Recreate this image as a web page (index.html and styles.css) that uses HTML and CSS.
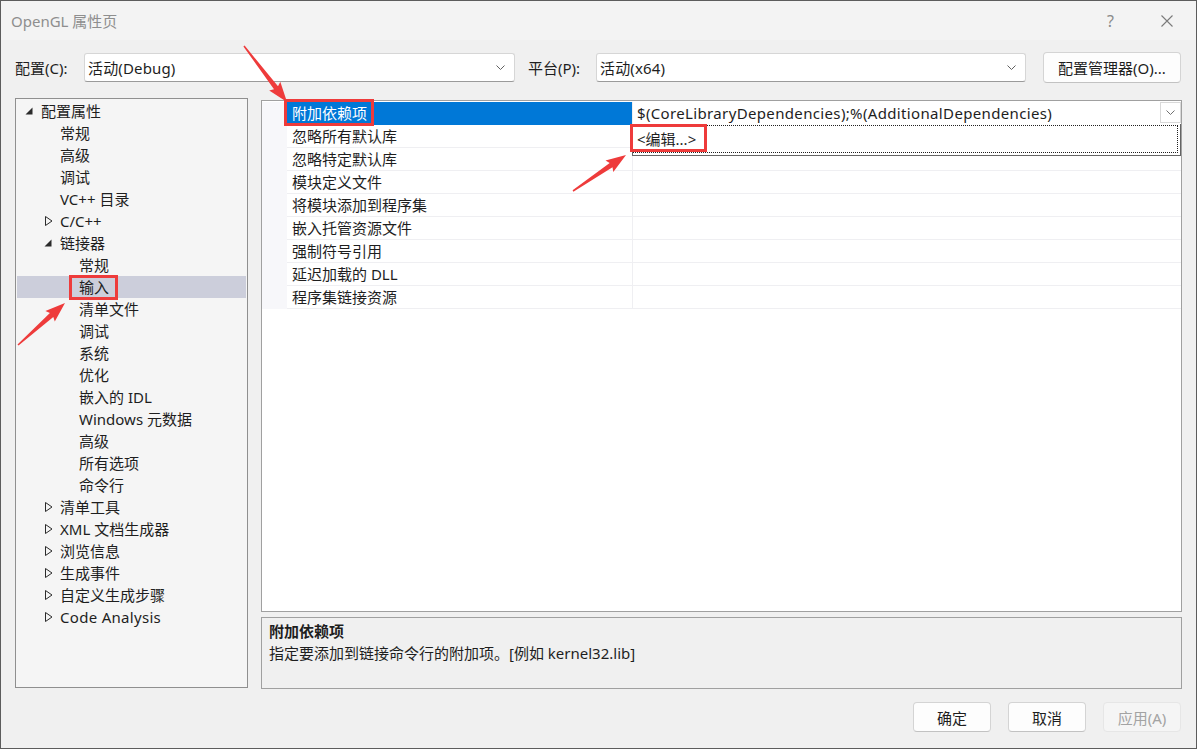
FILE: index.html
```html
<!DOCTYPE html>
<html lang="zh-CN">
<head>
<meta charset="utf-8">
<title>OpenGL 属性页</title>
<link rel="stylesheet" href="styles.css">
</head>
<body>
<div class="window">
  <div class="titlebar">
    <span class="title">OpenGL 属性页</span>
    <div class="title-actions">
      <span class="help">?</span>
      <svg class="close" width="12" height="12" viewBox="0 0 12 12"><path d="M0.5 0.5 L11.5 11.5 M11.5 0.5 L0.5 11.5" stroke="#7a7a7a" stroke-width="1.1" fill="none"/></svg>
    </div>
  </div>

  <div class="config-row">
    <span class="cfg-label">配置(C):</span>
    <div class="combo combo-config">
      <span class="combo-text">活动(Debug)</span>
      <svg class="chev" width="9" height="5" viewBox="0 0 9 5"><polyline points="0.5,0.5 4.5,4.5 8.5,0.5" fill="none" stroke="#606060" stroke-width="1"/></svg>
    </div>
    <span class="cfg-label cfg-platform">平台(P):</span>
    <div class="combo combo-platform">
      <span class="combo-text">活动(x64)</span>
      <svg class="chev" width="9" height="5" viewBox="0 0 9 5"><polyline points="0.5,0.5 4.5,4.5 8.5,0.5" fill="none" stroke="#606060" stroke-width="1"/></svg>
    </div>
    <button class="btn btn-manager">配置管理器(O)...</button>
  </div>

  <div class="main">
    <div class="tree">
      <div class="node l0"><span class="tw"><svg width="8" height="8" viewBox="0 0 8 8"><path d="M7.5 0.5 L7.5 7.5 L0.5 7.5 Z" fill="#2b2b2b"/></svg></span>配置属性</div>
      <div class="node l1"><span class="tw"></span>常规</div>
      <div class="node l1"><span class="tw"></span>高级</div>
      <div class="node l1"><span class="tw"></span>调试</div>
      <div class="node l1"><span class="tw"></span>VC++ 目录</div>
      <div class="node l1"><span class="tw"><svg class="col" width="8" height="10" viewBox="0 0 8 10"><path d="M0.5 0.5 L7 5 L0.5 9.5 Z" fill="none" stroke="#2b2b2b" stroke-width="1"/></svg></span>C/C++</div>
      <div class="node l1"><span class="tw"><svg width="8" height="8" viewBox="0 0 8 8"><path d="M7.5 0.5 L7.5 7.5 L0.5 7.5 Z" fill="#2b2b2b"/></svg></span>链接器</div>
      <div class="node l2"><span class="tw"></span>常规</div>
      <div class="node l2 selected"><span class="tw"></span>输入</div>
      <div class="node l2"><span class="tw"></span>清单文件</div>
      <div class="node l2"><span class="tw"></span>调试</div>
      <div class="node l2"><span class="tw"></span>系统</div>
      <div class="node l2"><span class="tw"></span>优化</div>
      <div class="node l2"><span class="tw"></span>嵌入的 IDL</div>
      <div class="node l2"><span class="tw"></span>Windows 元数据</div>
      <div class="node l2"><span class="tw"></span>高级</div>
      <div class="node l2"><span class="tw"></span>所有选项</div>
      <div class="node l2"><span class="tw"></span>命令行</div>
      <div class="node l1"><span class="tw"><svg class="col" width="8" height="10" viewBox="0 0 8 10"><path d="M0.5 0.5 L7 5 L0.5 9.5 Z" fill="none" stroke="#2b2b2b" stroke-width="1"/></svg></span>清单工具</div>
      <div class="node l1"><span class="tw"><svg class="col" width="8" height="10" viewBox="0 0 8 10"><path d="M0.5 0.5 L7 5 L0.5 9.5 Z" fill="none" stroke="#2b2b2b" stroke-width="1"/></svg></span>XML 文档生成器</div>
      <div class="node l1"><span class="tw"><svg class="col" width="8" height="10" viewBox="0 0 8 10"><path d="M0.5 0.5 L7 5 L0.5 9.5 Z" fill="none" stroke="#2b2b2b" stroke-width="1"/></svg></span>浏览信息</div>
      <div class="node l1"><span class="tw"><svg class="col" width="8" height="10" viewBox="0 0 8 10"><path d="M0.5 0.5 L7 5 L0.5 9.5 Z" fill="none" stroke="#2b2b2b" stroke-width="1"/></svg></span>生成事件</div>
      <div class="node l1"><span class="tw"><svg class="col" width="8" height="10" viewBox="0 0 8 10"><path d="M0.5 0.5 L7 5 L0.5 9.5 Z" fill="none" stroke="#2b2b2b" stroke-width="1"/></svg></span>自定义生成步骤</div>
      <div class="node l1"><span class="tw"><svg class="col" width="8" height="10" viewBox="0 0 8 10"><path d="M0.5 0.5 L7 5 L0.5 9.5 Z" fill="none" stroke="#2b2b2b" stroke-width="1"/></svg></span><span class="latin">Code Analysis</span></div>
    </div>

    <div class="right">
      <div class="grid">
        <div class="row sel">
          <div class="gutter"></div>
          <div class="name">附加依赖项</div>
          <div class="value">
            <span class="value-text">$(CoreLibraryDependencies);%(AdditionalDependencies)</span>
            <span class="drop-btn"><svg width="9" height="5" viewBox="0 0 9 5"><polyline points="0.5,0.5 4.5,4.5 8.5,0.5" fill="none" stroke="#707070" stroke-width="1"/></svg></span>
          </div>
        </div>
        <div class="row"><div class="gutter"></div><div class="name">忽略所有默认库</div><div class="value"></div></div>
        <div class="row"><div class="gutter"></div><div class="name">忽略特定默认库</div><div class="value"></div></div>
        <div class="row"><div class="gutter"></div><div class="name">模块定义文件</div><div class="value"></div></div>
        <div class="row"><div class="gutter"></div><div class="name">将模块添加到程序集</div><div class="value"></div></div>
        <div class="row"><div class="gutter"></div><div class="name">嵌入托管资源文件</div><div class="value"></div></div>
        <div class="row"><div class="gutter"></div><div class="name">强制符号引用</div><div class="value"></div></div>
        <div class="row"><div class="gutter"></div><div class="name">延迟加载的 DLL</div><div class="value"></div></div>
        <div class="row"><div class="gutter"></div><div class="name">程序集链接资源</div><div class="value"></div></div>

        <div class="dropdown-list">
          <div class="dropdown-item">&lt;编辑...&gt;</div>
        </div>
      </div>
      <div class="desc">
        <div class="desc-title">附加依赖项</div>
        <div class="desc-text">指定要添加到链接命令行的附加项。[例如 kernel32.lib]</div>
      </div>
    </div>
  </div>

  <div class="footer">
    <button class="btn btn-footer">确定</button>
    <button class="btn btn-footer">取消</button>
    <button class="btn btn-footer disabled">应用(A)</button>
  </div>

  <svg class="annotations" width="1197" height="749" viewBox="0 0 1197 749">
    <g fill="none" stroke="#ee3b3b" stroke-width="3">
      <rect x="285.5" y="100.5" width="87" height="24"/>
      <rect x="70.5" y="276.5" width="46" height="22"/>
      <rect x="631.5" y="125.5" width="74" height="25"/>
    </g>
    <g fill="#ee3b3b">
      <polygon points="243.4,46.5 274.0,89.2 269.2,90.4 287,102 280.3,81.8 278.0,86.2 244.6,45.5"/>
      <polygon points="18.5,345.6 53.3,316.9 54.8,321.5 65,303 45.4,311.1 49.9,313.1 17.5,344.4"/>
      <polygon points="573.4,191.7 612.5,167.2 613.3,172.0 626,155 605.5,160.4 609.7,163.0 572.6,190.3"/>
    </g>
  </svg>
</div>
</body>
</html>
```

FILE: styles.css
```css
* { box-sizing: border-box; }

html, body {
  margin: 0;
  padding: 0;
  background: #f0f0f0;
}

body {
  font-family: "Noto Sans", "Noto Sans CJK SC", sans-serif;
  font-size: 15px;
  color: #1e1e1e;
}

.window {
  position: relative;
  width: 1197px;
  height: 749px;
  border: 1px solid #5c5c5c;
  background: #f0f0f0;
  overflow: hidden;
}

/* title bar */
.titlebar {
  height: 39px;
  background: #f3f3f3;
  display: flex;
  align-items: center;
  justify-content: space-between;
  padding-left: 10px;
  padding-right: 23px;
}
.title {
  color: #8e8e8e;
  font-size: 15px;
}
.title-actions {
  display: flex;
  align-items: center;
}
.help {
  color: #8a8a8a;
  font-size: 16px;
  margin-right: 47px;
}
.close { display: block; }

/* config row */
.config-row {
  margin-top: 12px;
  height: 31px;
  display: flex;
  align-items: center;
  padding-left: 14px;
}
.cfg-label {
  width: 69px;
  flex: none;
  line-height: 20px;
}
.cfg-platform {
  width: 68px;
  margin-left: 13px;
}
.combo {
  height: 29px;
  background: #ffffff;
  border: 1px solid #d6d6d6;
  border-bottom-color: #9a9a9a;
  border-radius: 3px;
  display: flex;
  align-items: center;
  justify-content: space-between;
  padding: 0 9px 0 3px;
  flex: none;
}
.combo-config { width: 431px; }
.combo-platform { width: 430px; }
.combo-text { letter-spacing: 0.15px; }
.chev { display: block; }

.btn {
  font-family: "Noto Sans", "Noto Sans CJK SC", sans-serif;
  font-size: 15px;
  color: #1e1e1e;
  background: #fdfdfd;
  border: 1px solid #d4d4d4;
  border-bottom-color: #c2c2c2;
  border-radius: 4px;
  padding: 0;
}
.btn-manager {
  margin-left: 17px;
  width: 138px;
  height: 31px;
}

/* main */
.main {
  margin-top: 15px;
  display: flex;
  padding-left: 14px;
  height: 591px;
}

.tree {
  width: 233px;
  height: 590px;
  background: #f5f5f5;
  border: 1px solid #8f8f8f;
  padding: 1px;
  flex: none;
}
.node {
  height: 22px;
  line-height: 22px;
  display: flex;
  align-items: center;
  white-space: nowrap;
}
.node.l0 { padding-left: 7px; }
.node.l1 { padding-left: 26px; }
.node.l2 { padding-left: 45px; }
.node.selected { background: #cccedb; }
.latin { letter-spacing: 0.3px; }
.tw {
  width: 17px;
  flex: none;
  display: flex;
  align-items: center;
}
.tw svg { display: block; margin-left: 1px; }
.tw svg.col { margin-left: 2px; }
.node.l0 .tw svg { margin-left: 1px; margin-top: -1px; }

.right {
  margin-left: 13px;
  width: 921px;
  display: flex;
  flex-direction: column;
}

.grid {
  position: relative;
  margin-top: 2px;
  height: 512px;
  background: #ffffff;
  border: 1px solid #a0a0a0;
  padding-top: 1px;
}
.row {
  display: flex;
  height: 23px;
}
.gutter {
  width: 25px;
  flex: none;
  background: #f7f7fa;
}
.name {
  width: 346px;
  flex: none;
  padding-left: 5px;
  line-height: 22px;
  border-bottom: 1px solid #efeff2;
  border-right: 1px solid #efeff2;
  white-space: nowrap;
}
.value {
  flex: 1;
  display: flex;
  align-items: flex-start;
  justify-content: space-between;
  padding-left: 4px;
  line-height: 22px;
  border-bottom: 1px solid #efeff2;
}
.row.sel .name {
  background: #0078d7;
  color: #ffffff;
  border-bottom-color: #0078d7;
}
.row.sel .value {
  border-bottom-color: #ffffff;
}
.value-text {
  white-space: nowrap;
  letter-spacing: 0.35px;
}
.drop-btn {
  width: 21px;
  height: 21px;
  border: 1px solid #d9d9d9;
  background: #ffffff;
  display: flex;
  align-items: center;
  justify-content: center;
}
.drop-btn svg { display: block; }

.dropdown-list {
  position: absolute;
  left: 370px;
  top: 23px;
  width: 549px;
  height: 32px;
  background: #ffffff;
  border: 1px solid #646464;
  border-top: none;
  padding: 1px 2px 2px 0;
}
.dropdown-item {
  height: 100%;
  border: 1px dotted #202020;
  border-left: none;
  padding-left: 4px;
  line-height: 26px;
  white-space: nowrap;
}

.desc {
  margin-top: 5px;
  height: 72px;
  border: 1px solid #a0a0a0;
  background: #f0f0f0;
  padding: 2px 7px;
}
.desc-title {
  font-weight: bold;
  line-height: 22px;
}
.desc-text {
  line-height: 22px;
  white-space: nowrap;
}

/* footer */
.footer {
  margin-top: 13px;
  display: flex;
  justify-content: flex-end;
  gap: 17px;
  padding-right: 15px;
}
.btn-footer {
  width: 78px;
  height: 30px;
}
.btn-footer.disabled {
  background: #f5f5f5;
  border-color: #e6e6e6;
  color: #a3a3a3;
}

.annotations {
  position: absolute;
  left: -1px;
  top: -1px;
  pointer-events: none;
}
```
